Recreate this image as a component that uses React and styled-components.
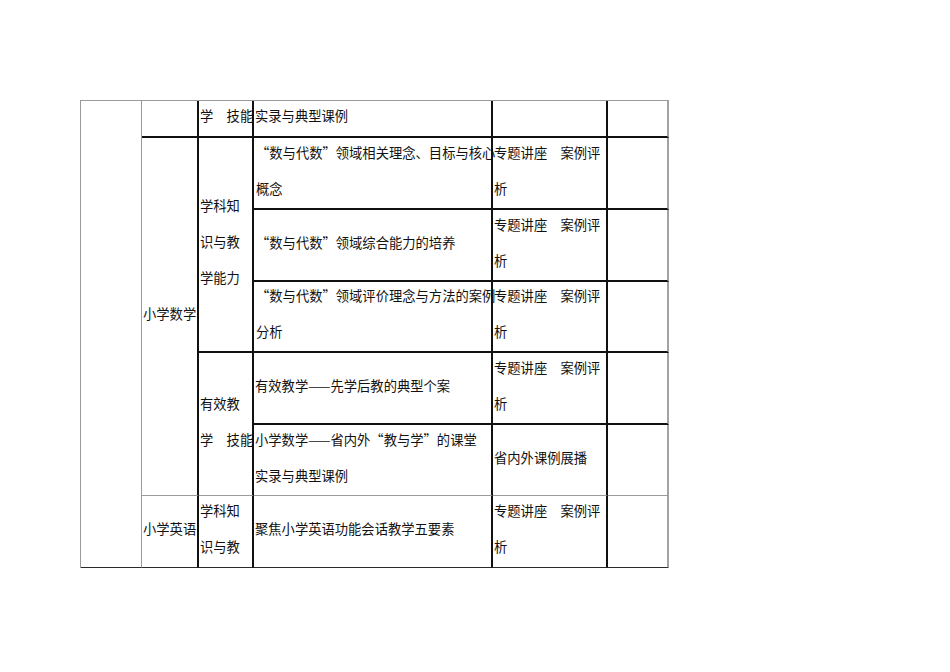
import React from 'react'
import styled, { createGlobalStyle } from 'styled-components'

// edge styles seen on the scanned table: heavy black inner rules, thin grey outer rules
const EDGES = {
  ink: '2px solid #111',
  gray: '1px solid #9a9a9a',
  edge: '2px solid #a3a3a3',
  dark: '1px solid #2a2a2a',
  none: 'none',
}

const LECTURE = ['专题讲座　案例评', '析']

// every cell: grid column, grid row (or span), its text lines, and how its right / bottom edge looks
const cells = [
  { col: '1', row: '1 / 8', right: 'gray', bottom: 'dark' },

  { col: '2', row: '1' },
  { col: '3', row: '1', lines: ['学　技能'] },
  { col: '4', row: '1', lines: ['实录与典型课例'] },
  { col: '5', row: '1' },
  { col: '6', row: '1', right: 'edge' },

  { col: '2', row: '2 / 7', bottom: 'gray', lines: ['小学数学'] },
  { col: '3', row: '2 / 5', lines: ['学科知', '识与教', '学能力'] },
  { col: '4', row: '2', lines: ['\u201C数与代数\u201D领域相关理念、目标与核心', '概念'], indent: true },
  { col: '5', row: '2', lines: LECTURE },
  { col: '6', row: '2', right: 'edge' },

  { col: '4', row: '3', lines: ['\u201C数与代数\u201D领域综合能力的培养'], indent: true },
  { col: '5', row: '3', lines: LECTURE },
  { col: '6', row: '3', right: 'edge' },

  { col: '4', row: '4', lines: ['\u201C数与代数\u201D领域评价理念与方法的案例', '分析'], indent: true },
  { col: '5', row: '4', lines: LECTURE },
  { col: '6', row: '4', right: 'edge' },

  { col: '3', row: '5 / 7', bottom: 'gray', lines: ['有效教', '学　技能'] },
  { col: '4', row: '5', lines: ['有效教学——先学后教的典型个案'] },
  { col: '5', row: '5', lines: LECTURE },
  { col: '6', row: '5', right: 'edge' },

  { col: '4', row: '6', bottom: 'gray', lines: ['小学数学——省内外\u201C教与学\u201D的课堂', '实录与典型课例'] },
  { col: '5', row: '6', bottom: 'gray', lines: ['省内外课例展播'] },
  { col: '6', row: '6', bottom: 'gray', right: 'edge' },

  { col: '2', row: '7', bottom: 'dark', lines: ['小学英语'] },
  { col: '3', row: '7', bottom: 'dark', lines: ['学科知', '识与教'] },
  { col: '4', row: '7', bottom: 'dark', lines: ['聚焦小学英语功能会话教学五要素'] },
  { col: '5', row: '7', bottom: 'dark', lines: LECTURE },
  { col: '6', row: '7', bottom: 'dark', right: 'edge' },
]

const App = () => {
  return (
    <>
      <GlobalStyle />
      <Page>
        <Sheet>
          {cells.map((cell, index) => (
            <Cell
              key={index}
              $col={cell.col}
              $row={cell.row}
              $right={EDGES[cell.right || 'ink']}
              $bottom={EDGES[cell.bottom || 'ink']}
              $indent={cell.indent}
            >
              {(cell.lines || []).map((line, i) => (
                <Line key={i}>{line}</Line>
              ))}
            </Cell>
          ))}
        </Sheet>
      </Page>
    </>
  )
}

const GlobalStyle = createGlobalStyle`
  html, body {
    margin: 0;
    padding: 0;
    background: #fff;
  }
  body {
    font-family: "Noto Sans CJK SC", "Noto Sans", sans-serif;
    color: #111;
  }
`

const Page = styled.main`
  width: 950px;
  height: 672px;
  padding: 100px 0 0 80px;
  box-sizing: border-box;
`

const Sheet = styled.div`
  display: grid;
  grid-template-columns: 61px 57px 55px 239px 115px 61px;
  grid-template-rows: 37px 72px 72px 71px 72px 71px 72px;
  width: max-content;
  border-top: 1px solid #9a9a9a;
  border-left: 1px solid #9a9a9a;
`

// text sits a few pixels above the true middle of each cell in the source
const Cell = styled.div`
  grid-column: ${({ $col }) => $col};
  grid-row: ${({ $row }) => $row};
  box-sizing: border-box;
  border-right: ${({ $right }) => $right};
  border-bottom: ${({ $bottom }) => $bottom};
  display: flex;
  flex-direction: column;
  justify-content: center;
  padding: 0 0 5px ${({ $indent }) => ($indent ? '2px' : '1px')};
  font-size: 13.3px;
  line-height: 36px;
  white-space: nowrap;
  overflow: visible;
  min-width: 0;
  min-height: 0;
`

const Line = styled.span`
  display: block;
  height: 36px;
`

export default App
